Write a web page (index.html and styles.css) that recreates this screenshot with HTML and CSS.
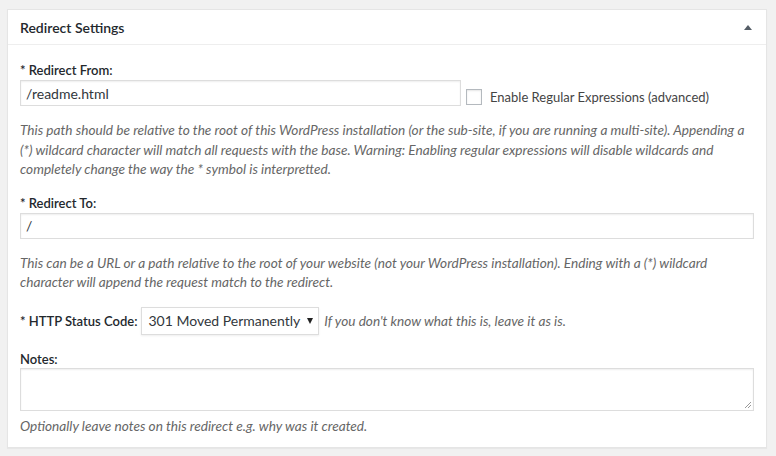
FILE: index.html
```html
<!DOCTYPE html>
<html lang="en">
<head>
    <meta charset="UTF-8">
    <title>Redirect Settings</title>
    <link rel="stylesheet" href="styles.css">
</head>
<body>
    <div class="postbox">
        <div class="postbox-header">
            <h2>Redirect Settings</h2>
            <span class="toggle-indicator"></span>
        </div>
        <div class="inside">
            <div class="field">
                <label class="field-label" for="redirectFrom">* Redirect From:</label>
                <div class="field-row">
                    <input type="text" id="redirectFrom" class="text-input from-input" value="/readme.html">
                    <label class="check-label"><span class="checkbox"></span>Enable Regular Expressions (advanced)</label>
                </div>
                <p class="description">This path should be relative to the root of this WordPress installation (or the sub-site, if you are running a multi-site). Appending a (*) wildcard character will match all requests with the base. Warning: Enabling regular expressions will disable wildcards and completely change the way the * symbol is interpretted.</p>
            </div>
            <div class="field">
                <label class="field-label" for="redirectTo">* Redirect To:</label>
                <input type="text" id="redirectTo" class="text-input" value="/">
                <p class="description">This can be a URL or a path relative to the root of your website (not your WordPress installation). Ending with a (*) wildcard character will append the request match to the redirect.</p>
            </div>
            <div class="field status-row">
                <label class="field-label" for="statusCode">* HTTP Status Code:</label>
                <div class="select-box" id="statusCode">301 Moved Permanently<span class="select-arrow"></span></div>
                <span class="inline-help">If you don't know what this is, leave it as is.</span>
            </div>
            <div class="field">
                <label class="field-label notes-label" for="notes">Notes:</label>
                <div class="textarea" id="notes"><span class="grip"></span></div>
                <p class="description notes-help">Optionally leave notes on this redirect e.g. why was it created.</p>
            </div>
        </div>
    </div>
</body>
</html>
```

FILE: styles.css
```css
body {
    margin: 0;
    padding: 9px 9px 6px 7px;
    background: #f1f1f1;
    color: #23282d;
    font-family: "Segoe UI", Lato, "Liberation Sans", sans-serif;
    font-size: 13px;
}

.postbox {
    background: #fff;
    border: 1px solid #e5e5e5;
    box-shadow: 0 1px 1px rgba(0, 0, 0, 0.04);
}

.postbox-header {
    display: flex;
    align-items: center;
    justify-content: space-between;
    height: 34px;
    padding: 0 14px 0 12px;
    border-bottom: 1px solid #eee;
}

.postbox-header h2 {
    margin: 0;
    font-size: 14px;
    font-weight: 600;
    color: #23282d;
}

.toggle-indicator {
    width: 0;
    height: 0;
    border-left: 4px solid transparent;
    border-right: 4px solid transparent;
    border-bottom: 5px solid #555d66;
}

.inside {
    padding: 16px 12px 11px 12px;
}

.field {
    margin-bottom: 14px;
}

.field-label {
    display: block;
    font-weight: 600;
    line-height: 18px;
    margin-bottom: 1px;
}

.field-row {
    display: flex;
    align-items: center;
}

.text-input {
    display: block;
    box-sizing: border-box;
    width: 100%;
    height: 26px;
    margin: 0;
    padding: 0 5px;
    border: 1px solid #ddd;
    box-shadow: inset 0 1px 2px rgba(0, 0, 0, 0.07);
    font-family: inherit;
    font-size: 14px;
    color: #32373c;
    outline: none;
}

.from-input {
    width: 441px;
}

.check-label {
    display: flex;
    align-items: center;
    margin-left: 5px;
    margin-top: 8px;
    font-size: 13px;
    color: #444;
}

.checkbox {
    width: 14px;
    height: 14px;
    margin-right: 8px;
    border: 1px solid #b4b9be;
    box-shadow: inset 0 1px 2px rgba(0, 0, 0, 0.1);
}

.description {
    margin: 15px 0 0;
    font-style: italic;
    font-size: 13.65px;
    color: #666;
    line-height: 19.5px;
}

.status-row {
    display: flex;
    align-items: center;
    margin-top: 12px;
    margin-bottom: 15px;
}

.status-row .field-label {
    margin: 0 4px 0 0;
}

.select-box {
    display: flex;
    align-items: center;
    box-sizing: border-box;
    height: 28px;
    padding: 0 5px 0 6px;
    border: 1px solid #ddd;
    box-shadow: 0 1px 2px rgba(0, 0, 0, 0.07);
    font-size: 14px;
    color: #32373c;
}

.select-arrow {
    width: 0;
    height: 0;
    margin-left: 7px;
    border-left: 3.5px solid transparent;
    border-right: 3.5px solid transparent;
    border-top: 6px solid #222;
}

.inline-help {
    margin-left: 5px;
    font-style: italic;
    font-size: 13.65px;
    color: #666;
}

.notes-label {
    margin-bottom: 0;
}

.textarea {
    position: relative;
    box-sizing: border-box;
    height: 43px;
    border: 1px solid #ddd;
    box-shadow: inset 0 1px 2px rgba(0, 0, 0, 0.07);
}

.grip {
    position: absolute;
    right: 2px;
    bottom: 2px;
    width: 6px;
    height: 6px;
    background: linear-gradient(135deg, transparent 45%, #999 45%, #999 55%, transparent 55%, transparent 70%, #999 70%, #999 80%, transparent 80%);
}

.notes-help {
    margin-top: 6px;
}

.field:last-child {
    margin-bottom: 0;
}
```
